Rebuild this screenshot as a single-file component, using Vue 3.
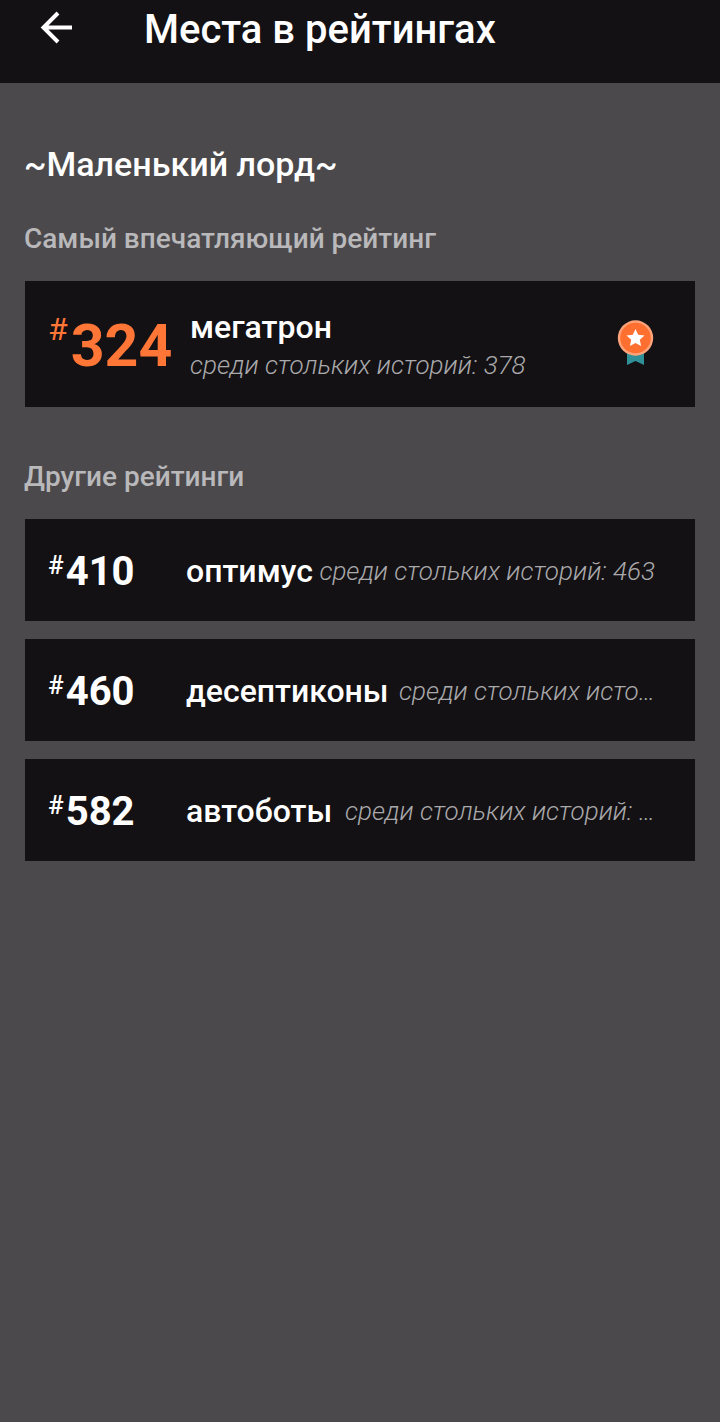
<script setup>
const ratings = [
  { place: 410, tag: 'оптимус', total: 'среди стольких историй: 463' },
  { place: 460, tag: 'десептиконы', total: 'среди стольких исто…' },
  { place: 582, tag: 'автоботы', total: 'среди стольких историй: …' },
]
</script>

<template>
  <div class="page">
    <header class="bar">
      <button class="back" type="button" aria-label="Назад">
        <svg width="36" height="36" viewBox="0 0 36 36" fill="none" stroke="#fff" stroke-width="4">
          <path d="M34 15.500H6M20 1L5.500 15.500L20 30" />
        </svg>
      </button>
      <h1>Места в рейтингах</h1>
    </header>
    <main>
      <h2>~Маленький лорд~</h2>
      <h3>Самый впечатляющий рейтинг</h3>
      <section class="card best">
        <div class="place"><span class="hash">#</span><strong>324</strong></div>
        <div class="info">
          <span class="tag">мегатрон</span>
          <span class="total">среди стольких историй: 378</span>
        </div>
        <svg class="medal" width="38" height="46" viewBox="0 0 38 46" aria-hidden="true">
          <path d="M10 30V45L18.500 41L27 45V30Z" fill="#2f9097" />
          <circle cx="18.500" cy="18" r="17.700" fill="#ffa37a" />
          <circle cx="18.500" cy="18" r="15.300" fill="#ff6f30" />
          <path d="M18.500 9L21.200 14.800L27.500 15.500L22.800 19.800L24.100 26L18.500 22.900L12.900 26L14.200 19.800L9.500 15.500L15.800 14.800Z" fill="#fff" />
        </svg>
      </section>
      <h3 class="second">Другие рейтинги</h3>
      <ul>
        <li v-for="r in ratings" :key="r.place" class="card row">
          <div class="place"><span class="hash">#</span><strong>{{ r.place }}</strong></div>
          <span class="tag">{{ r.tag }}</span>
          <span class="total">{{ r.total }}</span>
        </li>
      </ul>
    </main>
  </div>
</template>

<style>
body { margin: 0; background: #4b494c; }
</style>

<style scoped>
.page { min-height: 100vh; background: #4b494c; color: #fff; font-family: Roboto, "Noto Sans", sans-serif; }
.bar { display: flex; align-items: center; height: 83px; padding: 0 38px 24px; box-sizing: border-box; background: #131114; }
.back { display: flex; width: 36px; padding: 0; border: 0; background: none; cursor: pointer; }
.back svg { overflow: visible; }
h1, h2, h3, ul { margin: 0; font-weight: 500; }
h1 { margin-left: 70px; font-size: 40px; line-height: 48px; white-space: nowrap; }
main { padding: 61px 24px 0; }
h2 { font-size: 34px; line-height: 40px; }
h3 { margin: 39px 0 26px; font-size: 28px; line-height: 32px; color: #b9b8ba; }
h3.second { margin-top: 54px; }
.card { display: flex; align-items: center; box-sizing: border-box; margin: 0 1px; padding: 0 40px 0 23px; background: #131114; }
.best { height: 126px; }
.place { display: flex; align-items: flex-start; flex-shrink: 0; }
.best .place { width: 142px; padding-top: 4px; color: #ff7636; }
.best .hash { font-size: 32px; line-height: 40px; }
.best strong { margin-left: 3px; font-size: 59px; line-height: 74px; }
.info { flex: 1; min-width: 0; display: flex; flex-direction: column; padding-top: 4px; }
.tag { font-size: 32px; line-height: 38px; font-weight: 500; }
.total { font-size: 26px; line-height: 38px; font-weight: 300; font-style: italic; color: #aaa9ab; white-space: nowrap; overflow: hidden; text-overflow: ellipsis; }
.medal { flex-shrink: 0; margin-bottom: 2px; }
ul { display: flex; flex-direction: column; gap: 18px; padding: 0; list-style: none; }
.row { height: 102px; padding-top: 2px; }
.row .place { width: 138px; padding-top: 2px; }
.row .hash { font-size: 26px; line-height: 36px; }
.row strong { margin-left: 2px; font-size: 40px; line-height: 50px; }
.row .total { flex: 1; min-width: 0; text-align: right; }
</style>
